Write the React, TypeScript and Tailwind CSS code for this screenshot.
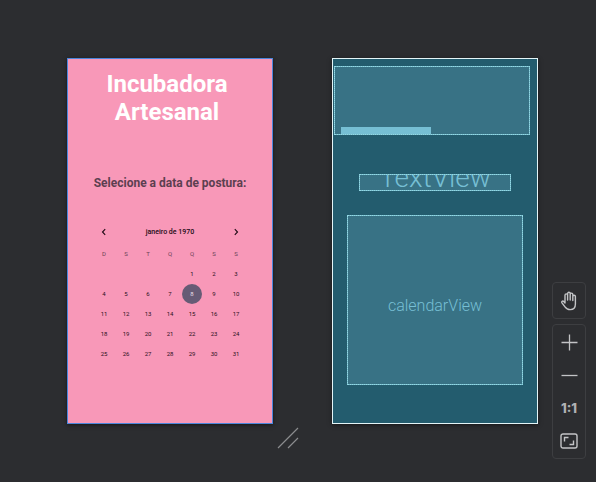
import React from "react";

const WEEKDAYS = ["D", "S", "T", "Q", "Q", "S", "S"];
const FIRST_WEEKDAY = 4;
const DAYS_IN_MONTH = 31;
const SELECTED_DAY = 8;

const weeks: (number | null)[][] = Array.from({ length: 5 }, (_, week) =>
  Array.from({ length: 7 }, (_, column) => {
    const day = week * 7 + column - FIRST_WEEKDAY + 1;
    return day >= 1 && day <= DAYS_IN_MONTH ? day : null;
  })
);

// Solid edge with a brighter dotted line over it, shared by every blueprint view.
const VIEW_BOX =
  "border border-[#76bccb] bg-[#387285] outline outline-1 -outline-offset-1 outline-dotted outline-[#93d8e5]";

function Chevron({ d }: { d: string }) {
  return (
    <svg viewBox="0 0 8 8" className="size-2" fill="none" stroke="currentColor" strokeWidth="1.1">
      <path d={d} />
    </svg>
  );
}

function Calendar() {
  return (
    <section className="mx-[25px] mt-[31px]">
      <div className="flex h-5 items-center justify-between px-[7px] text-[#1d0a14]">
        <button type="button" aria-label="Mês anterior">
          <Chevron d="M5.2 1.2 2.5 4l2.7 2.8" />
        </button>
        <h3 className="text-[7px] leading-5 font-medium">janeiro de 1970</h3>
        <button type="button" aria-label="Próximo mês">
          <Chevron d="M2.8 1.2 5.5 4 2.8 6.8" />
        </button>
      </div>
      <table className="mt-0.5 w-full table-fixed border-collapse text-center text-[6px] leading-5">
        <thead>
          <tr className="h-5 text-[#6d4355]">
            {WEEKDAYS.map((name, index) => (
              <th key={index} className="p-0 font-normal">
                {name}
              </th>
            ))}
          </tr>
        </thead>
        <tbody>
          {weeks.map((week, row) => (
            <tr key={row} className="h-5 text-[#2b1020]">
              {week.map((day, column) => (
                <td key={column} className="p-0">
                  {day === SELECTED_DAY ? (
                    <span className="mx-auto block size-5 rounded-full bg-[#665b75] text-[#e6dfe8]">
                      {day}
                    </span>
                  ) : (
                    day
                  )}
                </td>
              ))}
            </tr>
          ))}
        </tbody>
      </table>
    </section>
  );
}

function DesignPreview() {
  return (
    <section className="relative min-w-0 flex-1 border border-[#4a86dc] bg-[#f898b8] pb-[59px] shadow-[0_1px_4px_rgba(0,0,0,0.5)]">
      <h1 className="mt-[11px] mr-[7px] ml-px text-center text-2xl leading-7 font-bold text-white">
        Incubadora
        <br />
        Artesanal
      </h1>
      <h2 className="mt-[49px] text-center text-xs leading-4 font-bold text-[#5c3f50]">
        Selecione a data de postura:
      </h2>
      <Calendar />
      <svg
        viewBox="0 0 22 22"
        className="absolute top-full left-full mt-1 ml-[5px] size-[22px]"
        fill="none"
        stroke="#8b8c8e"
        strokeWidth="1.2"
      >
        <path d="M1 21 21 1M11 21 21 11" />
      </svg>
    </section>
  );
}

function Blueprint() {
  return (
    <section className="min-w-0 flex-1 border border-[#e4f5f7] bg-[#235c6e] pb-[38px] text-[#76bfd4] shadow-[0_1px_4px_rgba(0,0,0,0.5)]">
      <div className={`mt-[7px] mr-[7px] ml-px flex h-[69px] items-end pl-1.5 ${VIEW_BOX}`}>
        <div className="h-[7px] w-[90px] bg-[#76bfd4]" />
      </div>
      <div
        className={`mx-[26px] mt-[39px] flex h-[17px] items-end justify-center overflow-hidden ${VIEW_BOX}`}
      >
        <span className="text-[28px] leading-6 font-light">TextView</span>
      </div>
      <div className={`mx-[14px] mt-6 flex h-[170px] items-center justify-center ${VIEW_BOX}`}>
        <span className="pt-3 text-base leading-5 font-light">calendarView</span>
      </div>
    </section>
  );
}

function Toolbar() {
  return (
    <aside className="mt-56 -ml-[45px] flex w-[34px] shrink-0 flex-col gap-[5px] text-[#c3c4c6]">
      <div className="rounded border border-[#3d3e41]">
        <button type="button" aria-label="Pan" className="flex h-[35px] w-full items-center justify-center">
          <svg
            viewBox="0 0 18 20"
            className="h-5 w-[18px]"
            fill="none"
            stroke="currentColor"
            strokeWidth="1.4"
            strokeLinecap="round"
            strokeLinejoin="round"
          >
            <path d="M5 12V4.2a1.3 1.3 0 0 1 2.6 0V9M7.6 9V2.6a1.3 1.3 0 0 1 2.6 0V9M10.2 9V3.4a1.3 1.3 0 0 1 2.6 0V9.5M12.8 9.5V5.6a1.3 1.3 0 0 1 2.6 0V13c0 3.6-2 5.6-5.2 5.6-2.8 0-4-1-5.2-2.8L1.8 11.6c-.5-1 .8-2 1.8-1.2L5 12" />
          </svg>
        </button>
      </div>
      <div className="flex flex-col rounded border border-[#3d3e41] py-px">
        <button type="button" aria-label="Zoom in" className="flex h-[33px] items-center justify-center">
          <svg viewBox="0 0 17 17" className="size-[17px]" stroke="currentColor" strokeWidth="1.3">
            <path d="M.5 8.5h16M8.5.5v16" />
          </svg>
        </button>
        <button type="button" aria-label="Zoom out" className="flex h-[33px] items-center justify-center">
          <svg viewBox="0 0 17 17" className="size-[17px]" stroke="currentColor" strokeWidth="1.3">
            <path d="M.5 8.5h16" />
          </svg>
        </button>
        <button
          type="button"
          className="h-[33px] text-center font-[Inter,sans-serif] text-[13px] leading-[33px] font-extrabold text-[#b0b1b3]"
        >
          1:1
        </button>
        <button type="button" aria-label="Zoom to fit" className="flex h-8 items-center justify-center">
          <svg viewBox="0 0 18 16" className="h-4 w-[18px]" fill="none" stroke="currentColor" strokeWidth="1.4">
            <rect x="1" y="1" width="16" height="14" rx="2" />
            <path d="M4.5 8.5v-4h4M13.5 7.5v4h-4" />
          </svg>
        </button>
      </div>
    </aside>
  );
}

export default function App() {
  return (
    <main className="flex min-h-screen items-start gap-[59px] bg-[#2c2d30] pt-[58px] pr-2.5 pb-[23px] pl-[67px] font-[Roboto,sans-serif]">
      <DesignPreview />
      <Blueprint />
      <Toolbar />
    </main>
  );
}
